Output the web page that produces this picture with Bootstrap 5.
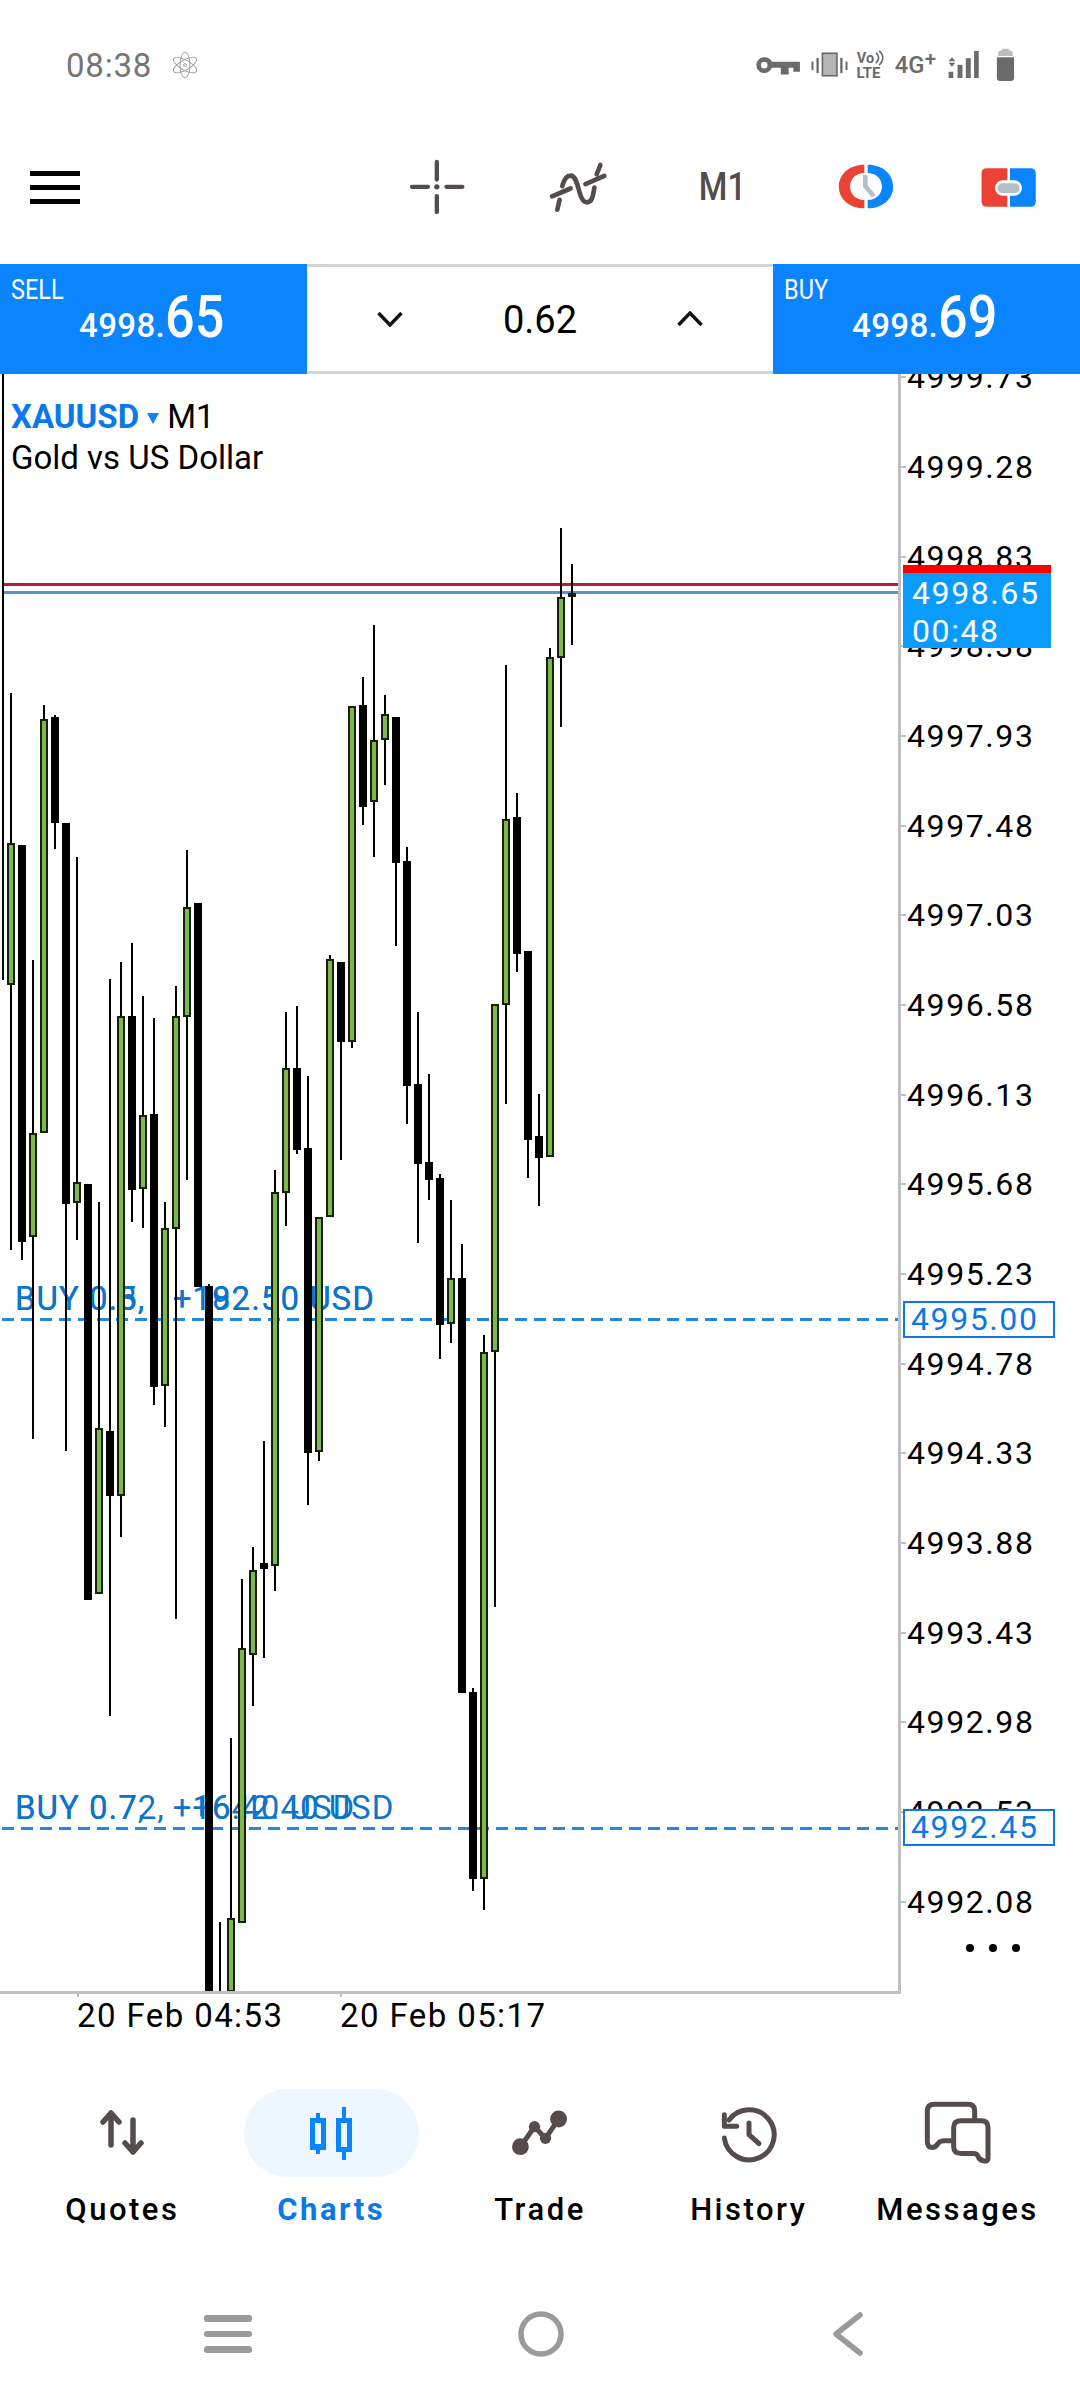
<!DOCTYPE html>
<html lang="en">
<head>
  <meta charset="UTF-8">
  <title>XAUUSD Chart</title>
  <link href="https://cdn.jsdelivr.net/npm/bootstrap@5.3.0/dist/css/bootstrap.min.css" rel="stylesheet">
  <style>
    html, body { background: #fff; }
    body { width: 1080px; height: 2392px; overflow: hidden; font-family: Roboto, "Liberation Sans", sans-serif; color: #000; }
    .status-strip { height: 130px; padding: 0 60px 0 66px; color: #757575; }
    .status-time { font-size: 33px; line-height: 1; letter-spacing: .8px; }
    .atom-mark { margin-left: 4px; }
    .tool-strip { height: 114px; margin-bottom: 20px; padding-left: 30px; }
    .burger { width: 50px; height: 33px; border-top: 5px solid #000; border-bottom: 5px solid #000; position: relative; }
    .burger::after { content: ""; position: absolute; left: 0; right: 0; top: 9px; height: 5px; background: #000; }
    .tool-cell { width: 143px; }
    .tool-shift { margin-right: 4px; }
    .tool-label { display: inline-block; font-size: 38px; font-weight: 500; color: #544b4b; line-height: 1; transform: scaleX(.86); }
    .trade-strip { height: 110px; }
    .side-box { width: 307px; background: #0a84ff; color: #fff; padding: 12px 0 0 11px; }
    .side-name { display: inline-block; font-size: 28px; line-height: 28px; transform: scaleX(.84); transform-origin: left center; }
    .side-price { padding-left: 68px; line-height: 56px; margin-top: -17px; white-space: nowrap; }
    .price-sm { font-size: 33px; font-weight: 500; letter-spacing: .4px; }
    .price-lg { display: inline-block; font-size: 60px; font-weight: 500; transform: scaleX(.87); transform-origin: left center; }
    .lot-box { border-top: 3px solid #d3d3d3; border-bottom: 3px solid #d3d3d3; padding: 0 70px; }
    .lot-value { font-size: 38px; line-height: 1; position: relative; top: 1px; }
    .chart-area { height: 1620px; }
    .plot-box { width: 901px; height: 1620px; position: relative; overflow: hidden; border-right: 3px solid #c0c0c0; border-bottom: 3px solid #c0c0c0; }
    .plot-svg { position: absolute; left: 0; top: 0; }
    .symbol-box { position: absolute; left: 11px; top: 22px; font-size: 33px; line-height: 41px; }
    .symbol-name { color: #0a78e8; font-weight: 700; }
    .symbol-arrow { display: inline-block; width: 0; height: 0; border-left: 6px solid transparent; border-right: 6px solid transparent; border-top: 11px solid #0a84ff; margin: 0 8px 4px 8px; }
    .order-text { position: absolute; left: 15px; font-size: 33px; line-height: 36px; color: #0d74cc; white-space: pre; letter-spacing: 1px; }
    .axis-box { width: 179px; height: 1617px; position: relative; overflow: hidden; }
    .axis-row { height: 89.7px; line-height: 89.7px; font-size: 32px; letter-spacing: 1.6px; padding-left: 6px; position: relative; }
    .axis-row:first-child { margin-top: -40.85px; }
    .axis-row::before { content: ""; position: absolute; left: 0; top: 43px; width: 5px; height: 2px; background: #c0c0c0; }
    .live-tag { position: absolute; left: 2px; top: 191px; width: 148px; height: 83px; background: #0a9bff; border-top: 8px solid #f00; color: #fff; font-size: 32px; line-height: 38px; letter-spacing: 1.6px; padding: 1px 0 0 9px; }
    .order-tag { position: absolute; left: 2px; width: 152px; height: 37px; background: #fff; border: 2px solid #0a78e8; color: #0a78e8; font-size: 32px; line-height: 33px; letter-spacing: 1.6px; padding-left: 6px; }
    .more-dots { position: absolute; left: 65px; top: 1570px; display: flex; gap: 15px; }
    .more-dots i { width: 8px; height: 8px; border-radius: 50%; background: #000; }
    .date-strip { height: 46px; padding-left: 77px; font-size: 33px; line-height: 44px; letter-spacing: 1.4px; }
    .date-cell { width: 263px; position: relative; }
    .date-cell::before { content: ""; position: absolute; left: 0; top: -3px; width: 2px; height: 6px; background: #c0c0c0; }
    .tab-strip { padding: 49px 18px 0; }
    .tab-icon { height: 88px; width: 175px; margin: 0 auto; border-radius: 44px; }
    .tab-on { background: #eef7ff; }
    .tab-name { font-size: 31px; line-height: 40px; margin-top: 13px; letter-spacing: 2.5px; font-weight: 500; white-space: nowrap; }
    .tab-name-on { color: #0a78e8; font-weight: 700; }
    .sys-strip { margin-top: 74px; height: 60px; padding: 0 217px 0 204px; }
    .sys-bars { width: 48px; display: flex; flex-direction: column; gap: 9px; }
    .sys-bars i { height: 6.5px; border-radius: 3px; background: #9a9a9a; }
    .sys-home { margin-right: 4px; }
  </style>
</head>
<body>

  <!-- status bar -->
  <div class="status-strip d-flex align-items-center justify-content-between">
    <div class="d-flex align-items-center gap-3">
      <span class="status-time">08:38</span>
      <svg class="atom-mark" width="26" height="28" viewBox="-13 -14 26 28" fill="none" stroke="#999" stroke-width=".9">
        <ellipse rx="5" ry="13" transform="rotate(0)"/>
        <ellipse rx="5" ry="13" transform="rotate(60)"/>
        <ellipse rx="5" ry="13" transform="rotate(120)"/>
        <circle r="1.4"/>
      </svg>
    </div>
    <svg width="267" height="38" viewBox="40 50 800 115">
      <g fill="#6b6b6b">
        <path fill-rule="evenodd" d="M70 84a24 24 0 1 0 23 32h27v20h24v-20h14v12h20v-30H93a24 24 0 0 0-23-14zm0 14a10 10 0 1 1 0 20 10 10 0 0 1 0-20z"/>
        <rect x="213" y="97" width="6" height="26"/>
        <rect x="228" y="86" width="7" height="46"/>
        <rect x="300" y="86" width="7" height="46"/>
        <rect x="316" y="97" width="6" height="26"/>
        <rect x="628" y="128" width="14" height="19"/>
        <rect x="655" y="107" width="15" height="40"/>
        <rect x="680" y="87" width="15" height="60"/>
        <rect x="705" y="65" width="14" height="82"/>
        <path d="M628 96l10-12 10 12zM628 101h20l-10 12z"/>
        <path d="M774 84h52v62q0 10-10 10h-32q-10 0-10-10z"/>
        <text x="350" y="101" font-size="44" font-weight="700">Vo</text>
        <text x="349" y="148" font-size="45" font-weight="700">LTE</text>
        <text x="465" y="131" font-size="72" font-weight="500">4G</text>
        <text x="556" y="110" font-size="62" font-weight="500">+</text>
      </g>
      <rect x="246" y="72" width="44" height="68" fill="#b5b5b5" stroke="#6b6b6b" stroke-width="5"/>
      <path d="M778 80v-8q0-8 12-9v-5h20v5q12 1 12 9v8z" fill="#bdbdbd"/>
      <path d="M408 70q16 16 0 32M418 64q22 22 0 44" fill="none" stroke="#6b6b6b" stroke-width="5"/>
    </svg>
  </div>

  <!-- toolbar -->
  <div class="tool-strip d-flex align-items-center">
    <div class="burger"></div>
    <div class="d-flex ms-auto">
      <div class="tool-cell d-flex justify-content-center align-items-center">
        <svg width="58" height="58" viewBox="80 53 175 175" fill="none" stroke="#544b4b" stroke-width="13" stroke-linecap="round">
          <path d="M92 140h48M196 140h48M167 65v53M167 168v48"/>
          <circle cx="167" cy="140" r="8" fill="#544b4b" stroke="none"/>
        </svg>
      </div>
      <div class="tool-cell d-flex justify-content-center align-items-center">
        <svg class="tool-shift" width="62" height="53" viewBox="500 60 185 160" fill="none" stroke="#544b4b" stroke-width="14" stroke-linecap="round">
          <path d="M530 207l7-30M545 136c5-20 13-32 25-32 15 0 20 25 27 50 6 23 13 31 23 31 15 0 18-20 22-45M649 100l11-28"/>
          <path d="M514 167l56-24M615 130l57-25"/>
        </svg>
      </div>
      <div class="tool-cell d-flex justify-content-center align-items-center"><span class="tool-label">M1</span></div>
      <div class="tool-cell d-flex justify-content-center align-items-center">
        <svg width="60" height="48" viewBox="105 70 180 145">
          <path fill="#ea4335" d="M190 75C145 75 113 103 113 141S145 207 190 207V182C165 182 147 165 147 141S165 100 190 100Z"/>
          <path fill="#0a84ff" d="M200 75C245 75 277 103 277 141S245 207 200 207V182C225 182 243 165 243 141S225 100 200 100Z"/>
          <path fill="none" stroke="#b4c0c8" stroke-width="14" d="M193 106V140L218 170"/>
        </svg>
      </div>
      <div class="tool-cell d-flex justify-content-center align-items-center">
        <svg width="60" height="43" viewBox="535 75 180 130">
          <path fill="#ea4335" d="M620 82H558Q542 82 542 98V182Q542 198 558 198H620Z"/>
          <path fill="#0a84ff" d="M628 82H690Q706 82 706 98V182Q706 198 690 198H628Z"/>
          <rect x="583" y="118" width="81" height="47" rx="23" fill="#fff"/>
          <rect x="590" y="127" width="67" height="30" rx="15" fill="#b0bec5"/>
        </svg>
      </div>
    </div>
  </div>

  <!-- sell / lot / buy -->
  <div class="trade-strip d-flex">
    <div class="side-box">
      <div class="side-name">SELL</div>
      <div class="side-price"><span class="price-sm">4998.</span><span class="price-lg">65</span></div>
    </div>
    <div class="lot-box flex-grow-1 d-flex align-items-center justify-content-between">
      <svg width="26" height="16" viewBox="0 0 26 16" fill="none" stroke="#111" stroke-width="3.4"><path d="M1.5 2L13 14 24.5 2"/></svg>
      <span class="lot-value">0.62</span>
      <svg width="26" height="16" viewBox="0 0 26 16" fill="none" stroke="#111" stroke-width="3.4"><path d="M1.5 14L13 2 24.5 14"/></svg>
    </div>
    <div class="side-box">
      <div class="side-name">BUY</div>
      <div class="side-price"><span class="price-sm">4998.</span><span class="price-lg">69</span></div>
    </div>
  </div>

  <!-- chart -->
  <div class="chart-area d-flex">
    <div class="plot-box">
      <div class="symbol-box">
        <div><span class="symbol-name">XAUUSD</span><span class="symbol-arrow"></span>M1</div>
        <div>Gold vs US Dollar</div>
      </div>
      <div class="order-text" style="top: 907px">BUY 0.3,   +192.50 USD</div>
      <div class="order-text" style="top: 907px">BUY 0.5,   +182.50 USD</div>
      <div class="order-text" style="top: 1416px">BUY 0.72,   +642.40 USD</div>
      <div class="order-text" style="top: 1416px">BUY 0.7,   +16.40 USD</div>
      <svg id="plot" class="plot-svg" width="898" height="1617" viewBox="0 374 898 1617" shape-rendering="crispEdges"></svg>
    </div>
    <div class="axis-box">
      <div class="axis-row">4999.73</div>
      <div class="axis-row">4999.28</div>
      <div class="axis-row">4998.83</div>
      <div class="axis-row">4998.38</div>
      <div class="axis-row">4997.93</div>
      <div class="axis-row">4997.48</div>
      <div class="axis-row">4997.03</div>
      <div class="axis-row">4996.58</div>
      <div class="axis-row">4996.13</div>
      <div class="axis-row">4995.68</div>
      <div class="axis-row">4995.23</div>
      <div class="axis-row">4994.78</div>
      <div class="axis-row">4994.33</div>
      <div class="axis-row">4993.88</div>
      <div class="axis-row">4993.43</div>
      <div class="axis-row">4992.98</div>
      <div class="axis-row">4992.53</div>
      <div class="axis-row">4992.08</div>
      <div class="live-tag">4998.65<br>00:48</div>
      <div class="order-tag" style="top: 927px">4995.00</div>
      <div class="order-tag" style="top: 1435px">4992.45</div>
      <div class="more-dots"><i></i><i></i><i></i></div>
    </div>
  </div>

  <div class="date-strip d-flex">
    <div class="date-cell">20 Feb 04:53</div>
    <div class="date-cell">20 Feb 05:17</div>
  </div>

  <!-- bottom tabs -->
  <div class="tab-strip row row-cols-5 g-0 text-center">
    <div class="col">
      <div class="tab-icon d-flex align-items-center justify-content-center">
        <svg width="44" height="46" viewBox="0 0 44 46" fill="none" stroke="#574c4c" stroke-width="5.5" stroke-linecap="round" stroke-linejoin="round">
          <path d="M11 35V3M3 12l8-9 8 9"/><path d="M33 10v32M25 33l8 9 8-9"/>
        </svg>
      </div>
      <div class="tab-name">Quotes</div>
    </div>
    <div class="col">
      <div class="tab-icon tab-on d-flex align-items-center justify-content-center">
        <svg width="44" height="55" viewBox="309 2106 44 55" fill="#0a84ff" fill-rule="evenodd" shape-rendering="crispEdges">
          <path d="M310 2118h6v-5h4v5h6v32h-6v4h-4v-4h-6zm5 5v21h6v-21z"/>
          <path d="M336 2118h6v-11h4v11h6v34h-6v8h-4v-8h-6zm5 5v24h6v-24z"/>
        </svg>
      </div>
      <div class="tab-name tab-name-on">Charts</div>
    </div>
    <div class="col">
      <div class="tab-icon d-flex align-items-center justify-content-center">
        <svg width="56" height="46" viewBox="512 2110 56 46" fill="#574c4c">
          <path d="M520.4 2146.7L534.5 2126.7 545.5 2138.3 558.6 2119" fill="none" stroke="#574c4c" stroke-width="5"/>
          <circle cx="520.4" cy="2146.7" r="8.4"/><circle cx="558.6" cy="2119" r="8.4"/>
          <circle cx="534.5" cy="2126.7" r="5.6"/><circle cx="545.5" cy="2138.3" r="5.6"/>
        </svg>
      </div>
      <div class="tab-name">Trade</div>
    </div>
    <div class="col">
      <div class="tab-icon d-flex align-items-center justify-content-center">
        <svg width="60" height="60" viewBox="175 35 180 180" fill="none" stroke="#574c4c" stroke-width="15" stroke-linecap="round" stroke-linejoin="round">
          <path d="M191 140A75 75 0 1 0 205 86"/>
          <path d="M191 70V105H228"/>
          <path d="M265 95V130L295 157"/>
        </svg>
      </div>
      <div class="tab-name">History</div>
    </div>
    <div class="col">
      <div class="tab-icon d-flex align-items-center justify-content-center">
        <svg width="70" height="67" viewBox="790 30 210 200" fill="none" stroke="#574c4c" stroke-width="15" stroke-linejoin="round">
          <path d="M945 90V62Q945 42 925 42H825Q803 42 803 62V155Q803 172 818 172 828 172 835 160 840 152 855 152H880"/>
          <path d="M905 92H965Q985 92 985 112V205Q985 215 972 212 960 210 955 198 952 190 940 190H905Q882 190 882 170V112Q882 92 905 92Z"/>
        </svg>
      </div>
      <div class="tab-name">Messages</div>
    </div>
  </div>

  <!-- android nav -->
  <div class="sys-strip d-flex align-items-center justify-content-between">
    <div class="sys-bars"><i></i><i></i><i></i></div>
    <svg class="sys-home" width="46" height="46" viewBox="0 0 46 46" fill="none" stroke="#9a9a9a" stroke-width="5.5"><circle cx="23" cy="23" r="20"/></svg>
    <svg width="30" height="44" viewBox="0 0 30 44" fill="none" stroke="#9a9a9a" stroke-width="5.5" stroke-linecap="round" stroke-linejoin="round"><path d="M27 3L3 22l24 19"/></svg>
  </div>

  <script>
    // [type, wick top, body top, body bottom, wick bottom], 11px per bar; g = green, k = black
    const velas = [
      ['g',693,843,985,1250],['k',845,845,1242,1260],['g',960,1133,1237,1439],['g',705,719,1133,1133],
      ['k',715,717,823,849],['k',823,823,1204,1451],['g',857,1182,1203,1240],['k',1184,1184,1600,1600],
      ['g',1202,1428,1594,1594],['k',979,1431,1496,1716],['g',962,1016,1496,1537],['k',943,1016,1190,1222],
      ['g',996,1115,1189,1228],['k',1018,1114,1387,1405],['g',1202,1228,1386,1427],['g',986,1016,1229,1619],
      ['g',850,907,1017,1180],['k',903,903,1287,1287],['k',1284,1286,1992,1992],['k',1922,1992,1992,1992],
      ['g',1738,1918,1992,1992],['g',1579,1648,1923,1923],['g',1547,1570,1655,1706],['k',1441,1563,1569,1658],
      ['g',1170,1192,1566,1591],['g',1012,1068,1193,1226],['k',1006,1068,1150,1154],['k',1076,1148,1453,1505],
      ['g',1217,1217,1452,1461],['g',955,959,1217,1217],['k',962,962,1042,1160],['g',706,706,1042,1048],
      ['k',677,705,807,825],['g',625,740,802,857],['g',695,714,740,785],['k',717,717,863,946],
      ['k',847,861,1086,1124],['k',1012,1084,1164,1243],['k',1074,1162,1180,1200],['k',1174,1178,1325,1359],
      ['g',1200,1278,1324,1343],['k',1244,1278,1693,1693],['k',1688,1692,1879,1891],['g',1335,1352,1879,1910],
      ['g',1004,1004,1352,1607],['g',665,819,1005,1104],['k',793,817,954,972],['k',951,951,1140,1178],
      ['k',1094,1136,1158,1206],['g',648,657,1157,1157],['g',528,597,658,727],['g',564,593,597,645]
    ];

    const rect = (x, y, w, h, c) => `<rect x="${x}" y="${y}" width="${w}" height="${h}" fill="${c}"/>`;

    let svg = rect(3, 583, 895, 3, '#b5202e') + rect(3, 591, 895, 3, '#4f9bc6');
    [1318, 1827].forEach(y => {
      for (let x = 2; x < 898; x += 19) svg += rect(x, y, 12, 3, '#2288e0');
    });
    svg += rect(2, 374, 2, 606, '#000');
    velas.forEach((v, i) => {
      const cx = Math.round(10.7 + 11 * i);
      const [tipo, wt, bt, bb, wb] = v;
      svg += rect(cx - 1, wt, 2, wb - wt, '#000');
      if (tipo === 'k') {
        svg += rect(cx - 4, bt, 8, bb - bt, '#000');
      } else {
        svg += rect(cx - 4, bt, 8, bb - bt, '#1a1f14');
        svg += rect(cx - 2, bt + 2, 4, Math.max(bb - bt - 4, 0), '#7db84a');
      }
    });
    document.getElementById('plot').innerHTML = svg;
  </script>

  <script src="https://cdn.jsdelivr.net/npm/bootstrap@5.3.0/dist/js/bootstrap.bundle.min.js"></script>
</body>
</html>
